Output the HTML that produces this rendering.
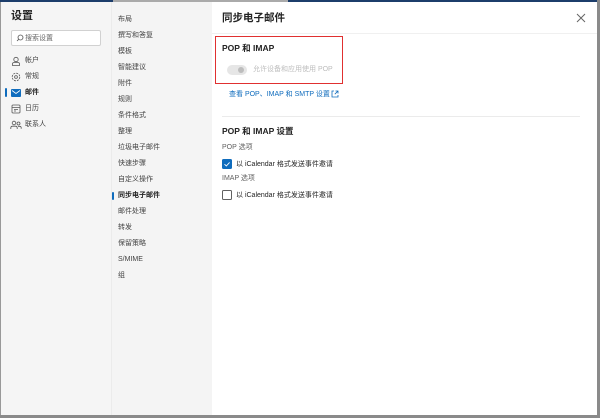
<!DOCTYPE html>
<html><head><meta charset="utf-8"><style>
*{margin:0;padding:0;box-sizing:border-box}
body{width:600px;height:418px;overflow:hidden;background:#fff;font-family:"Liberation Sans","Noto Sans CJK SC",sans-serif;position:relative;color:#242424}
.a{position:absolute;white-space:nowrap;line-height:1}
.m{font-size:7px;color:#424242}
</style></head><body>
<div class="a" style="left:0;top:0;width:600px;height:2px;background:#1c3d6b"></div>
<div class="a" style="left:113px;top:0;width:175px;height:2px;background:#aaa"></div>
<div class="a" style="left:0;top:2px;width:1px;height:416px;background:#999"></div>
<div class="a" style="left:597px;top:0;width:3px;height:418px;background:#8a8a8a"></div>
<div class="a" style="left:0;top:415px;width:600px;height:3px;background:#8a8a8a"></div>
<div class="a" style="left:1px;top:2px;width:110px;height:413px;background:#f5f5f5"></div>
<div class="a" style="left:111px;top:2px;width:101px;height:413px;background:#f4f4f4;border-left:1px solid #ebebeb"></div>
<div class="a" style="left:212px;top:2px;width:385px;height:413px;background:#fff"></div>

<div class="a" style="left:11px;top:11px;font-size:11px;font-weight:bold">设置</div>
<div class="a" style="left:11px;top:30px;width:90px;height:16px;background:#fff;border:1px solid #d1d1d1;border-radius:2px"></div>
<svg class="a" style="left:16px;top:34px" width="8" height="8" viewBox="0 0 8 8"><circle cx="4.5" cy="3.5" r="2.5" fill="none" stroke="#555" stroke-width=".8"/><path d="M2.7 5.3L1 7" stroke="#555" stroke-width=".8"/></svg>
<div class="a m" style="left:25px;top:35px;color:#666">搜索设置</div>

<svg class="a" style="left:11px;top:56px" width="10" height="10" viewBox="0 0 10 10"><circle cx="5" cy="3.5" r="2.2" fill="none" stroke="#555" stroke-width=".8"/><path d="M1.5 9.5v-1.5q0-1.5 1.5-1.5h4q1.5 0 1.5 1.5v1.5z" fill="none" stroke="#555" stroke-width=".8"/></svg>
<div class="a m" style="left:25px;top:57px">帐户</div>
<svg class="a" style="left:11px;top:72px" width="10" height="10" viewBox="0 0 10 10"><circle cx="5" cy="5" r="3.8" fill="none" stroke="#555" stroke-width=".8" stroke-dasharray="2 1"/><circle cx="5" cy="5" r="1.4" fill="none" stroke="#555" stroke-width=".8"/></svg>
<div class="a m" style="left:25px;top:73px">常规</div>
<div class="a" style="left:5px;top:88px;width:2px;height:9px;background:#0f6cbd;border-radius:1px"></div>
<svg class="a" style="left:11px;top:89px" width="10" height="8" viewBox="0 0 10 8"><rect x="0" y="0" width="10" height="8" rx="1" fill="#0f6cbd"/><path d="M1 1.5l4 3 4-3" stroke="#fff" stroke-width=".8" fill="none"/></svg>
<div class="a m" style="left:25px;top:89px;font-weight:bold;color:#242424">邮件</div>
<svg class="a" style="left:11px;top:104px" width="10" height="10" viewBox="0 0 10 10"><rect x="1" y="1" width="8" height="8" rx="1" fill="none" stroke="#555" stroke-width=".8"/><path d="M1 3.5h8M3 5.5h4M3 7h2" stroke="#555" stroke-width=".7"/></svg>
<div class="a m" style="left:25px;top:105px">日历</div>
<svg class="a" style="left:10px;top:120px" width="12" height="10" viewBox="0 0 12 10"><circle cx="4" cy="3" r="1.8" fill="none" stroke="#555" stroke-width=".8"/><circle cx="8.5" cy="3.5" r="1.5" fill="none" stroke="#555" stroke-width=".8"/><path d="M.8 9v-1q0-1.8 1.8-1.8h2.8q1.8 0 1.8 1.8v1M8 6.3h1.5q1.7 0 1.7 1.5v1" fill="none" stroke="#555" stroke-width=".8"/></svg>
<div class="a m" style="left:25px;top:121px">联系人</div>

<div class="a m" style="left:118px;top:16px">布局</div>
<div class="a m" style="left:118px;top:32px">撰写和答复</div>
<div class="a m" style="left:118px;top:48px">模板</div>
<div class="a m" style="left:118px;top:64px">智能建议</div>
<div class="a m" style="left:118px;top:80px">附件</div>
<div class="a m" style="left:118px;top:96px">规则</div>
<div class="a m" style="left:118px;top:112px">条件格式</div>
<div class="a m" style="left:118px;top:128px">整理</div>
<div class="a m" style="left:118px;top:144px">垃圾电子邮件</div>
<div class="a m" style="left:118px;top:160px">快速步骤</div>
<div class="a m" style="left:118px;top:176px">自定义操作</div>
<div class="a" style="left:112px;top:192px;width:2px;height:8px;background:#0f6cbd;border-radius:1px"></div>
<div class="a m" style="left:118px;top:192px;font-weight:bold;color:#242424">同步电子邮件</div>
<div class="a m" style="left:118px;top:208px">邮件处理</div>
<div class="a m" style="left:118px;top:224px">转发</div>
<div class="a m" style="left:118px;top:240px">保留策略</div>
<div class="a m" style="left:118px;top:256px">S/MIME</div>
<div class="a m" style="left:118px;top:272px">组</div>

<div class="a" style="left:222px;top:13px;font-size:10.5px;font-weight:bold">同步电子邮件</div>
<svg class="a" style="left:576px;top:13px" width="10" height="10" viewBox="0 0 10 10"><path d="M1 1l8 8M9 1l-8 8" stroke="#666" stroke-width="1"/></svg>
<div class="a" style="left:212px;top:33px;width:385px;height:1px;background:#f0f0f0"></div>

<div class="a" style="left:215px;top:36px;width:128px;height:48px;border:1.3px solid #e03030"></div>
<div class="a" style="left:222px;top:44px;font-size:8.5px;font-weight:bold">POP 和 IMAP</div>
<div class="a" style="left:227px;top:65px;width:20px;height:10px;border-radius:5px;background:#e6e6e6"></div>
<div class="a" style="left:238px;top:67px;width:6px;height:6px;border-radius:3px;background:#bdbdbd"></div>
<div class="a" style="left:253px;top:66px;font-size:7px;color:#bdbdbd">允许设备和应用使用 POP</div>
<div class="a" style="left:229px;top:91px;font-size:7px;color:#0f6cbd">查看 POP、IMAP 和 SMTP 设置</div>
<svg class="a" style="left:331px;top:90px" width="8" height="8" viewBox="0 0 8 8"><path d="M3 1H1v6h6V5M4.5 1H7v2.5M7 1L3.8 4.2" fill="none" stroke="#0f6cbd" stroke-width=".8"/></svg>
<div class="a" style="left:222px;top:116px;width:358px;height:1px;background:#ebebeb"></div>
<div class="a" style="left:222px;top:127px;font-size:8.5px;font-weight:bold">POP 和 IMAP 设置</div>
<div class="a" style="left:222px;top:144px;font-size:7px;color:#616161">POP 选项</div>
<div class="a" style="left:222px;top:159px;width:10px;height:10px;border-radius:1.5px;background:#0f6cbd"></div>
<svg class="a" style="left:222px;top:159px" width="10" height="10" viewBox="0 0 10 10"><path d="M2.5 5.2l1.8 1.8 3.3-3.6" fill="none" stroke="#fff" stroke-width=".9"/></svg>
<div class="a" style="left:236px;top:161px;font-size:7px">以 iCalendar 格式发送事件邀请</div>
<div class="a" style="left:222px;top:175px;font-size:7px;color:#616161">IMAP 选项</div>
<div class="a" style="left:222px;top:190px;width:10px;height:10px;border-radius:1.5px;border:1px solid #616161;background:#fff"></div>
<div class="a" style="left:236px;top:192px;font-size:7px">以 iCalendar 格式发送事件邀请</div>
</body></html>
